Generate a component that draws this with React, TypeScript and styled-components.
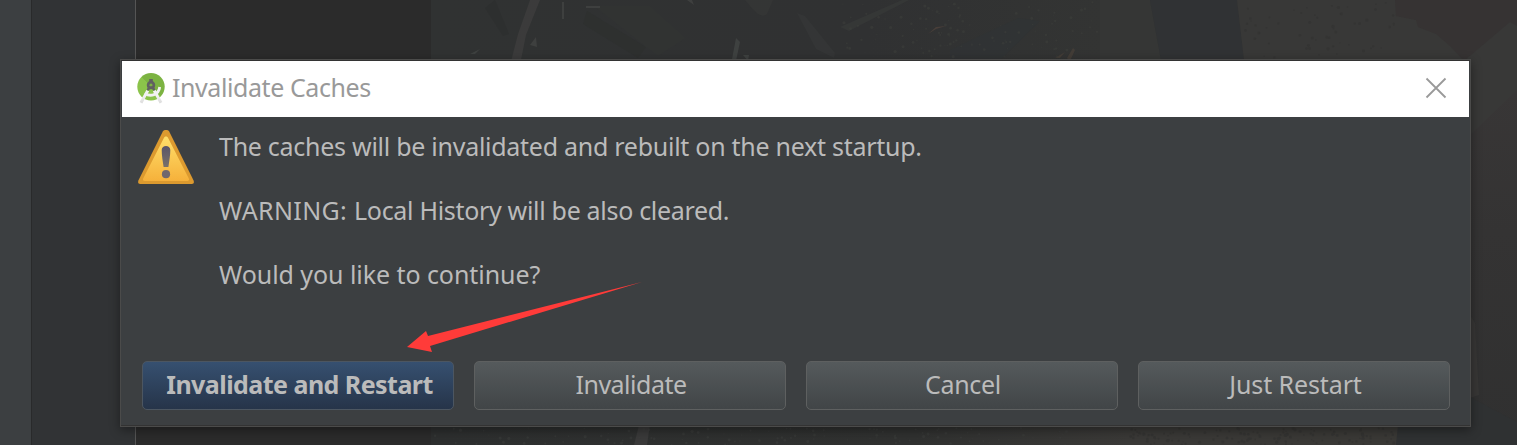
import React from "react";
import styled, { createGlobalStyle } from "styled-components";

const GlobalStyle = createGlobalStyle`
  * { box-sizing: border-box; }
  body { margin: 0; background: #2b2b2b; overflow: hidden; font-family: "Noto Sans", "Open Sans", sans-serif; }
`;

const Editor = styled.div`
  position: relative;
  display: flex;
  width: 1517px;
  height: 445px;
  overflow: hidden;
  background: #2b2b2b;
`;

const ToolStripe = styled.div`
  width: 32px;
  background: #3c3f41;
  border-right: 1px solid #292a2b;
`;

const Gutter = styled.div`
  width: 104px;
  background: #313335;
  border-right: 1px solid #555555;
`;

const Canvas = styled.div`
  flex: 1;
  padding-left: 295px;
`;

const WallpaperArt = styled.svg`
  display: block;
`;

const Dialog = styled.section`
  position: absolute;
  left: 120px;
  top: 59px;
  width: 1351px;
  height: 368px;
  display: flex;
  flex-direction: column;
  padding: 1px;
  border: 1px solid #4b4b4a;
  background: #3c3f41;
  box-shadow: 0 3px 10px rgba(0, 0, 0, 0.4), inset 0 1px #333, inset 0 -1px #333;
`;

const TitleBar = styled.header`
  display: flex;
  align-items: center;
  height: 56px;
  padding: 0 22px 0 14px;
  background: #fff;
  color: #999;
`;

const Title = styled.h1`
  flex: 1;
  margin: 0 0 0 6px;
  padding-bottom: 3px;
  font-size: 25px;
  font-weight: 400;
  line-height: 53px;
  letter-spacing: -0.42px;
`;

const CloseButton = styled.button`
  display: flex;
  padding: 0 0 2px;
  border: 0;
  background: none;
`;

const Content = styled.div`
  display: flex;
  flex: 1;
  padding: 12px 15px 0;
`;

const Message = styled.div`
  margin: 1px 0 0 24px;
  color: #bbb;
  font-size: 25px;
  line-height: 32px;
`;

const Line = styled.p<{ $spacing: number }>`
  width: max-content;
  margin: 0 0 32px;
  letter-spacing: ${(p) => p.$spacing}px;
`;

const Lead = styled.span`
  letter-spacing: 0.38px;
`;

const Actions = styled.footer`
  display: grid;
  grid-template-columns: repeat(4, 312px);
  gap: 20px;
  padding: 0 19px 15px 20px;
`;

const Button = styled.button<{ $primary?: boolean; $spacing: number; $indent?: number }>`
  height: 49px;
  padding: 0 0 2px ${(p) => p.$indent ?? 0}px;
  border: 1px solid ${(p) => (p.$primary ? "#4c5661" : "#5e6060")};
  border-radius: 5px;
  background: ${(p) =>
    p.$primary
      ? "linear-gradient(#365070, #263449)"
      : "linear-gradient(#555a5c, #414547)"};
  color: #bbb;
  font-family: inherit;
  font-size: 25px;
  font-weight: ${(p) => (p.$primary ? 700 : 400)};
  line-height: 45px;
  letter-spacing: ${(p) => p.$spacing}px;
`;

const Arrow = styled.svg`
  position: absolute;
  left: 400px;
  top: 275px;
  pointer-events: none;
`;

const random = (seed: number) => {
  const v = Math.sin(seed * 127.1) * 43758.5453;
  return v - Math.floor(v);
};

function Speckles({ x, y, w, h, count, fill, seed }: {
  x: number; y: number; w: number; h: number; count: number; fill: string; seed: number;
}) {
  return (
    <g fill={fill} opacity="0.5">
      {Array.from({ length: count }, (_, i) => (
        <circle
          key={i}
          cx={x + random(seed + i * 3) * w}
          cy={y + random(seed + i * 3 + 1) * h}
          r={0.5 + random(seed + i * 3 + 2) * 1.1}
        />
      ))}
    </g>
  );
}

function Wallpaper() {
  return (
    <WallpaperArt width="1086" height="445" viewBox="431 0 1086 445">
      <defs>
        <linearGradient id="base" x1="0" x2="1" y1="0" y2="0">
          <stop offset="0" stopColor="#303232" />
          <stop offset="0.4" stopColor="#303132" />
          <stop offset="0.62" stopColor="#333433" />
        </linearGradient>
        <linearGradient id="ground" x1="0" x2="1" y1="0" y2="0">
          <stop offset="0" stopColor="#2d2f2f" />
          <stop offset="0.5" stopColor="#303130" />
          <stop offset="0.72" stopColor="#3a3937" />
          <stop offset="1" stopColor="#3a3936" />
        </linearGradient>
        <linearGradient id="side" x1="0" x2="0" y1="0" y2="1">
          <stop offset="0" stopColor="#383636" />
          <stop offset="0.4" stopColor="#343333" />
          <stop offset="1" stopColor="#303030" />
        </linearGradient>
      </defs>
      <path d="M431 0h1086v445H431z" fill="url(#base)" />
      <g opacity="0.7">
        <path d="M485 8 495 0 509 34 503 36z" fill="#2d2f2f" />
        <path d="M530 0h10L526 35l-6 30h-10l8-31z" fill="#403f3f" />
        <path d="M587 11 646 47l-8 11-55-34z" fill="#2e302f" />
        <path d="m594 6 56 0 36 32-28 18-12-9z" fill="#323432" />
        <path d="m687 0 5 0 2 5zM562 2h2v17h-2zM586 6h14v2h-14zM536 37l-6 8 7 2z" fill="#454645" />
        <path d="M745 0h28l-6 14c-6 5-12-2-22-14z" fill="#373837" />
        <path d="m797 13 8 3 30 37-1 5-18-9z" fill="#363838" />
        <path d="m736 38 4 4-4 19-4-2zM743 55l6 0-1 6zM470 54l10-5-5 5z" fill="#454847" />
        <path d="m840 27 62-27h7l-60 31z" fill="#383a39" />
        <path d="m928 34 8-7 10-1-10 3z" fill="#52443d" />
        <path d="m950 50 68-32 22 3-40 39h-50z" fill="#303335" />
        <path d="m1067 58 6-10 2 2-5 11zM1055 58l10-6-5 6z" fill="#4a413a" />
      </g>
      <path d="M1100 0h50l11 60h-61z" fill="#353635" />
      <path d="M1150 0h87l7 60h-83z" fill="#303234" />
      <path d="M1237 0h280v130l-37 10-236-80z" fill="#383837" />
      <path d="m1395 0 1 16 20 4 2 7 18 7 14 12 14 15 46-39 7 4V0z" fill="#363333" />
      <path d="M1470 135 1517 90v355h-47z" fill="url(#side)" />
      <path d="m1470 315 5 8 4 72-9 3z" fill="#383736" />
      <path d="M431 425h969l-4 20H431z" fill="url(#ground)" />
      <path d="m639 425 11 0-3 20h-13z" fill="#3a3a3a" />
      <path d="m1398 425 72-28 47 25v23h-121z" fill="#2f3132" />
      <Speckles x={840} y={2} w={260} h={56} count={110} fill="#3e403c" seed={4} />
      <Speckles x={1245} y={2} w={150} h={56} count={55} fill="#313130" seed={60} />
      <Speckles x={431} y={428} w={650} h={17} count={110} fill="#3d3f3d" seed={17} />
      <Speckles x={1130} y={428} w={265} h={17} count={130} fill="#30302f" seed={33} />
    </WallpaperArt>
  );
}

function StudioLogo() {
  return (
    <svg width="30" height="32" viewBox="0 0 30 32">
      <defs>
        <linearGradient id="disc" x1="0" y1="1" x2="1" y2="0">
          <stop offset="0.5" stopColor="#8bc34a" />
          <stop offset="0.5" stopColor="#7cb342" />
        </linearGradient>
        <linearGradient id="leg" gradientUnits="userSpaceOnUse" x1="0" y1="17" x2="0" y2="30">
          <stop offset="0.4" stopColor="#f3f3f3" />
          <stop offset="1" stopColor="#dcdcdc" />
        </linearGradient>
      </defs>
      <circle cx="15" cy="13.700" r="13.700" fill="url(#disc)" />
      <path d="M11.800 17.500 5 29.700M18.200 17.500 25 29.700" stroke="url(#leg)" strokeWidth="3" />
      <path d="M8.800 20.300c5.700 4 14 1.500 14.900-6.300" fill="none" stroke="#f1f1f1" strokeWidth="2.800" />
      <path d="M13.200 6h3.600v3.500h-3.600z" fill="#616161" />
      <circle cx="15" cy="12" r="2.900" fill="none" stroke="#616161" strokeWidth="2.700" />
      <path d="m12 13.500-1.400 3.600 1.700.7L15 15.200l2.700 2.600 1.700-.7-1.400-3.600z" fill="#616161" />
    </svg>
  );
}

function WarningIcon() {
  return (
    <svg width="58" height="58" viewBox="0 0 58 58">
      <defs>
        <linearGradient id="warn" x1="0" y1="0" x2="0" y2="1">
          <stop offset="0" stopColor="#ffdf6a" />
          <stop offset="1" stopColor="#f6b13b" />
        </linearGradient>
        <linearGradient id="mark" x1="0" y1="0" x2="0" y2="1">
          <stop offset="0" stopColor="#5a5568" />
          <stop offset="1" stopColor="#78706a" />
        </linearGradient>
      </defs>
      <path d="M25.800 2.500C27 .6 31 .6 32.200 2.500L56.600 51.500C57.500 54 56.500 55 54.500 55h-51C1.500 55 .5 54 1.400 51.500z" fill="#dc9a2f" />
      <path d="M27 8.800c.8-1.800 3.200-1.800 4 0l20.800 40.700c.6 1.500 0 2.500-1.500 2.500H7.700c-1.500 0-2.100-1-1.500-2.500z" fill="url(#warn)" />
      <path d="M24.700 21c0-5.500 8.600-5.500 8.600 0 0 5-1 11-1.900 17h-4.800C25.700 32 24.700 26 24.700 21z" fill="url(#mark)" />
      <circle cx="29" cy="45.200" r="4.100" fill="#70676d" />
    </svg>
  );
}

export default function App() {
  return (
    <>
      <GlobalStyle />
      <Editor>
        <ToolStripe />
        <Gutter />
        <Canvas>
          <Wallpaper />
        </Canvas>
        <Dialog>
          <TitleBar>
            <StudioLogo />
            <Title>Invalidate Caches</Title>
            <CloseButton aria-label="Close">
              <svg width="22" height="22" viewBox="0 0 22 22">
                <path d="m1.500 1.500 19 19m0-19-19 19" stroke="#999" strokeWidth="1.800" />
              </svg>
            </CloseButton>
          </TitleBar>
          <Content>
            <WarningIcon />
            <Message>
              <Line $spacing={-0.27}>The caches will be invalidated and rebuilt on the next startup.</Line>
              <Line $spacing={-0.31}><Lead>WARNING: </Lead>Local History will be also cleared.</Line>
              <Line $spacing={-0.06}>Would you like to continue?</Line>
            </Message>
          </Content>
          <Actions>
            <Button $primary $spacing={-0.54} $indent={3}>Invalidate and Restart</Button>
            <Button $spacing={-0.5} $indent={2}>Invalidate</Button>
            <Button $spacing={-0.3} $indent={2}>Cancel</Button>
            <Button $spacing={-0.1} $indent={3}>Just Restart</Button>
          </Actions>
        </Dialog>
        <Arrow width="250" height="85" viewBox="400 275 250 85">
          <path d="m407 347 19-16 2 5L642 282 430 346l2 6z" fill="#ff3b39" />
        </Arrow>
      </Editor>
    </>
  );
}
